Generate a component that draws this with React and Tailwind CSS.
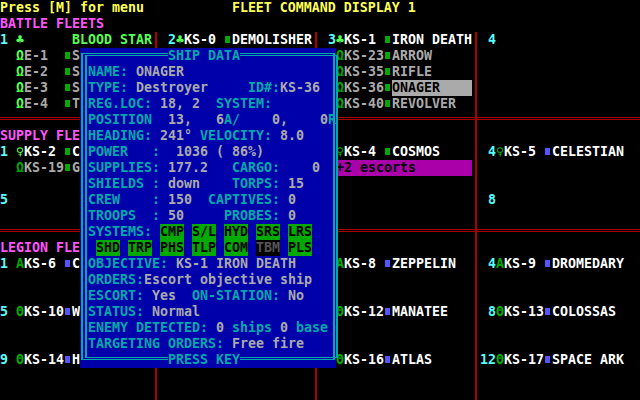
import React from "react";

const YELLOW = "text-[#FFFF55]";
const PINK = "text-[#FF55FF]";
const AQUA = "text-[#55FFFF]";
const LIME = "text-[#55FF55]";
const GREEN = "text-[#00AA00]";
const WHITE = "text-white";
const GRAY = "text-[#AAAAAA]";
const BLUE = "text-[#5555FF]";

function Ship({ pad = "", num = "", sym, symColor = GREEN, id, idColor = WHITE, dot = GREEN, name, nameColor = WHITE, nameBox = "" }) {
  return (
    <>
      {pad}
      <span className={AQUA}>{num}</span>
      <span className={symColor}>{sym}</span>
      <span className={idColor}>{id}</span>
      <span className={`inline-block h-4 w-2 align-top ${dot}`}>
        <span className="ml-px mt-1 block h-[7px] w-[5px] bg-current" />
      </span>
      <span className={`inline-block h-4 ${nameColor} ${nameBox}`}>{name}</span>
    </>
  );
}

function Row({ cells = [], children }) {
  return (
    <div className="relative flex h-4">
      {[0, 1, 2].map((i) => (
        <div key={i} className="h-4 w-40 shrink-0">
          <div className="h-4 w-[157px] whitespace-pre border-r-2 border-[#AA0000]">{cells[i]}</div>
        </div>
      ))}
      <div className="h-4 w-40 shrink-0 whitespace-pre">{cells[3]}</div>
      {children}
    </div>
  );
}

function Divider() {
  return (
    <Row>
      <div className="absolute inset-x-0 top-[5px] h-[3px] border-y border-[#AA0000]" />
    </Row>
  );
}

function Line({ children }) {
  return <div className="h-4 whitespace-pre text-[#00AAAA]">{children}</div>;
}

function Chip({ children, off }) {
  return <span className={`inline-block h-4 ${off ? "bg-black text-[#555555]" : "bg-[#00AA00] text-black"}`}>{children}</span>;
}

function ShipData() {
  return (
    <div className="absolute left-20 top-12 h-80 w-64 bg-[#0000AA] px-px pt-[5px]">
      <div className="flex h-[307px] border-x-2 border-y border-[#00AAAA] px-[2px] py-px">
        <div className="flex-1 border-x-2 border-y border-[#00AAAA] pl-px pt-2">
          <Line>NAME: <span className={GRAY}>ONAGER</span></Line>
          <Line>TYPE: <span className={GRAY}>Destroyer</span>     ID#:<span className={GRAY}>KS-36</span></Line>
          <Line>REG.LOC: <span className={GRAY}>18, 2</span>  SYSTEM:</Line>
          <Line>POSITION  <span className={GRAY}>13,   6</span>A/<span className={GRAY}>    0,    0</span>R</Line>
          <Line>HEADING: <span className={GRAY}>241°</span> VELOCITY: <span className={GRAY}>8.0</span></Line>
          <Line>POWER   :  <span className={GRAY}>1036 ( 86%)</span></Line>
          <Line>SUPPLIES: <span className={GRAY}>177.2</span>   CARGO:    <span className={GRAY}>0</span></Line>
          <Line>SHIELDS : <span className={GRAY}>down</span>    TORPS: <span className={GRAY}>15</span></Line>
          <Line>CREW    : <span className={GRAY}>150</span>  CAPTIVES: <span className={GRAY}>0</span></Line>
          <Line>TROOPS  : <span className={GRAY}>50</span>     PROBES: <span className={GRAY}>0</span></Line>
          <Line>SYSTEMS: <Chip>CMP</Chip> <Chip>S/L</Chip> <Chip>HYD</Chip> <Chip>SRS</Chip> <Chip>LRS</Chip></Line>
          <Line> <Chip>SHD</Chip> <Chip>TRP</Chip> <Chip>PHS</Chip> <Chip>TLP</Chip> <Chip>COM</Chip> <Chip off>TBM</Chip> <Chip>PLS</Chip></Line>
          <Line>OBJECTIVE: <span className={GRAY}>KS-1 IRON DEATH</span></Line>
          <Line>ORDERS:<span className={GRAY}>Escort objective ship</span></Line>
          <Line>ESCORT: <span className={GRAY}>Yes</span>  ON-STATION: <span className={GRAY}>No</span></Line>
          <Line>STATUS: <span className={GRAY}>Normal</span></Line>
          <Line>ENEMY DETECTED: <span className={GRAY}>0</span> ships <span className={GRAY}>0</span> base</Line>
          <Line>TARGETING ORDERS: <span className={GRAY}>Free fire</span></Line>
        </div>
      </div>
      <div className="absolute left-[88px] top-0 h-4 bg-[#0000AA] text-[#00AAAA]">SHIP DATA</div>
      <div className="absolute bottom-0 left-[88px] h-4 bg-[#0000AA] text-[#00AAAA]">PRESS KEY</div>
    </div>
  );
}

export default function App() {
  return (
    <div className="relative h-[400px] w-[640px] overflow-hidden bg-black font-['DejaVu_Sans_Mono',monospace] text-[13.29px] font-bold leading-[15px]">
      <div className={`h-4 whitespace-pre ${YELLOW}`}>Press [M] for menu           FLEET COMMAND DISPLAY 1</div>
      <div className={`h-4 ${PINK}`}>BATTLE FLEETS</div>

      <Row
        cells={[
          <>
            <span className={AQUA}>1 </span>
            <span className={LIME}>♣      BLOOD STAR</span>
          </>,
          <Ship pad=" " num="2" sym="♣" symColor={LIME} id="KS-0 " name="DEMOLISHER" />,
          <Ship pad=" " num="3" sym="♣" symColor={LIME} id="KS-1 " name="IRON DEATH" />,
          <span className={AQUA}> 4</span>,
        ]}
      />
      <Row cells={[<Ship pad="  " sym="Ω" symColor={LIME} id="E-1  " idColor={GRAY} name="S" nameColor={GRAY} />, null, <Ship pad="  " sym="Ω" id="KS-23" idColor={GRAY} name="ARROW" nameColor={GRAY} />]} />
      <Row cells={[<Ship pad="  " sym="Ω" symColor={LIME} id="E-2  " idColor={GRAY} name="S" nameColor={GRAY} />, null, <Ship pad="  " sym="Ω" id="KS-35" idColor={GRAY} name="RIFLE" nameColor={GRAY} />]} />
      <Row cells={[<Ship pad="  " sym="Ω" symColor={LIME} id="E-3  " idColor={GRAY} name="S" nameColor={GRAY} />, null, <Ship pad="  " sym="Ω" id="KS-36" idColor={GRAY} name="ONAGER    " nameColor="text-black" nameBox="bg-[#AAAAAA]" />]} />
      <Row cells={[<Ship pad="  " sym="Ω" symColor={LIME} id="E-4  " idColor={GRAY} name="T" nameColor={GRAY} />, null, <Ship pad="  " sym="Ω" id="KS-40" idColor={GRAY} name="REVOLVER" nameColor={GRAY} />]} />
      <Divider />

      <Row cells={[<span className={PINK}>SUPPLY FLE</span>]} />
      <Row
        cells={[
          <Ship num="1 " sym="♀" symColor={LIME} id="KS-2 " name="C" />,
          null,
          <Ship pad="  " sym="♀" id="KS-4 " name="COSMOS" />,
          <Ship pad=" " num="4" sym="♀" id="KS-5 " dot={BLUE} name="CELESTIAN" />,
        ]}
      />
      <Row
        cells={[
          <Ship pad="  " sym="Ω" id="KS-19" idColor={GRAY} name="G" nameColor={GRAY} />,
          null,
          <>
            {"  "}
            <span className="inline-block h-4 bg-[#AA00AA] text-black">+2 escorts       </span>
          </>,
        ]}
      />
      <Row />
      <Row cells={[<span className={AQUA}>5</span>, null, null, <span className={AQUA}> 8</span>]} />
      <Row />
      <Divider />

      <Row cells={[<span className={PINK}>LEGION FLE</span>]} />
      <Row
        cells={[
          <Ship num="1 " sym="A" id="KS-6 " dot={BLUE} name="C" />,
          null,
          <Ship pad="  " sym="A" id="KS-8 " dot={BLUE} name="ZEPPELIN" />,
          <Ship pad=" " num="4" sym="A" id="KS-9 " dot={BLUE} name="DROMEDARY" />,
        ]}
      />
      <Row />
      <Row />
      <Row
        cells={[
          <Ship num="5 " sym="Θ" id="KS-10" dot={BLUE} name="W" />,
          null,
          <Ship pad="  " sym="Θ" id="KS-12" dot={BLUE} name="MANATEE" />,
          <Ship pad=" " num="8" sym="Θ" id="KS-13" dot={BLUE} name="COLOSSAS" />,
        ]}
      />
      <Row />
      <Row />
      <Row
        cells={[
          <Ship num="9 " sym="Θ" id="KS-14" dot={BLUE} name="H" />,
          null,
          <Ship pad="  " sym="Θ" id="KS-16" dot={BLUE} name="ATLAS" />,
          <Ship num="12" sym="Θ" id="KS-17" dot={BLUE} name="SPACE ARK" />,
        ]}
      />
      <Row />
      <Row />

      <ShipData />
    </div>
  );
}
